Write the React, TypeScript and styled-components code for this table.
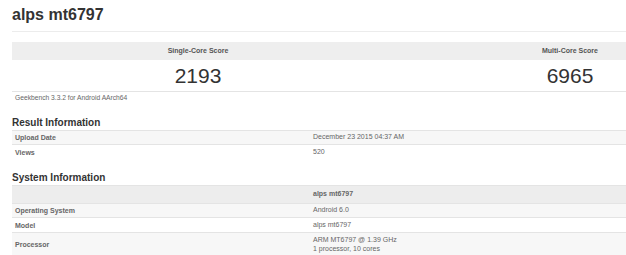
import React from "react";
import styled, { createGlobalStyle } from "styled-components";

const Global = createGlobalStyle`
  html, body { margin: 0; padding: 0; background: #fff; overflow: hidden; }
  body { font-family: "Liberation Sans", Arial, sans-serif; color: #333; }
`;

const Page = styled.div`
  width: 744px;
  padding-left: 12px;
`;

const Title = styled.h1`
  margin: 0;
  padding: 5px 0 6px;
  font-size: 16px;
  line-height: 20px;
  font-weight: bold;
  color: #333;
  border-bottom: 1px solid #ececec;
`;

const ScoreTable = styled.div`
  margin-top: 10px;
  display: grid;
  grid-template-columns: 1fr 1fr;
  border-bottom: 1px solid #e4e4e4;
`;

const ScoreHead = styled.div`
  background: #eeeeee;
  height: 18px;
  line-height: 18px;
  text-align: center;
  font-size: 7px;
  font-weight: bold;
  color: #555;
`;

const ScoreValue = styled.div`
  height: 31px;
  line-height: 31px;
  text-align: center;
  font-size: 21px;
  color: #333;
`;

const Note = styled.div`
  padding-left: 3px;
  font-size: 6.7px;
  line-height: 12px;
  color: #666;
`;

const SectionTitle = styled.h2<{ $top: number }>`
  margin: ${(p) => p.$top}px 0 0;
  font-size: 10px;
  line-height: 14px;
  font-weight: bold;
  color: #333;
`;

const InfoTable = styled.div`
  border-top: 1px solid #e4e4e4;
`;

const Row = styled.div<{ $bg: string; $h: number; $border?: boolean }>`
  display: grid;
  grid-template-columns: 298px 1fr;
  align-items: center;
  min-height: ${(p) => p.$h}px;
  background: ${(p) => p.$bg};
  border-bottom: ${(p) => (p.$border ? "1px solid #e4e4e4" : "none")};
`;

const Label = styled.div`
  padding-left: 3px;
  font-size: 7px;
  font-weight: bold;
  color: #666;
`;

const Value = styled.div<{ $bold?: boolean }>`
  padding-left: 3px;
  font-size: 7px;
  line-height: 8.5px;
  font-weight: ${(p) => (p.$bold ? "bold" : "normal")};
  color: #666;
`;

export default function App() {
  return (
    <>
      <Global />
      <Page>
        <Title>alps mt6797</Title>
        <ScoreTable>
          <ScoreHead>Single-Core Score</ScoreHead>
          <ScoreHead>Multi-Core Score</ScoreHead>
          <ScoreValue>2193</ScoreValue>
          <ScoreValue>6965</ScoreValue>
        </ScoreTable>
        <Note>Geekbench 3.3.2 for Android AArch64</Note>

        <SectionTitle $top={12}>Result Information</SectionTitle>
        <InfoTable>
          <Row $bg="#f7f7f7" $h={13} $border>
            <Label>Upload Date</Label>
            <Value>December 23 2015 04:37 AM</Value>
          </Row>
          <Row $bg="#ffffff" $h={14}>
            <Label>Views</Label>
            <Value>520</Value>
          </Row>
        </InfoTable>

        <SectionTitle $top={12}>System Information</SectionTitle>
        <InfoTable>
          <Row $bg="#ededed" $h={17} $border>
            <Label></Label>
            <Value $bold>alps mt6797</Value>
          </Row>
          <Row $bg="#f7f7f7" $h={13} $border>
            <Label>Operating System</Label>
            <Value>Android 6.0</Value>
          </Row>
          <Row $bg="#ffffff" $h={14} $border>
            <Label>Model</Label>
            <Value>alps mt6797</Value>
          </Row>
          <Row $bg="#f7f7f7" $h={23} $border>
            <Label>Processor</Label>
            <Value>
              ARM MT6797 @ 1.39 GHz
              <br />1 processor, 10 cores
            </Value>
          </Row>
        </InfoTable>
      </Page>
    </>
  );
}
